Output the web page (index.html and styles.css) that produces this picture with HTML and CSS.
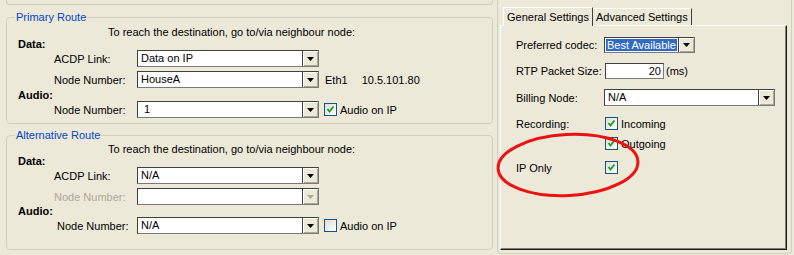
FILE: index.html
```html
<!DOCTYPE html>
<html lang="en">
<head>
    <meta charset="UTF-8">
    <title>Route Settings</title>
    <link rel="stylesheet" href="styles.css">
</head>
<body>
    <div class="window">
        <div class="left">
            <div class="group-tail"></div>

            <!-- primary route -->
            <fieldset class="group primary">
                <legend>Primary Route</legend>
                <p class="hint">To reach the destination, go to/via neighbour node:</p>
                <h4 class="section">Data:</h4>
                <div class="row">
                    <label class="field">ACDP Link:</label>
                    <div class="combo"><span class="value">Data on IP</span><span class="drop"><svg width="7" height="4" viewBox="0 0 7 4"><polygon points="0,0 7,0 3.5,4"/></svg></span></div>
                </div>
                <div class="row gap">
                    <label class="field">Node Number:</label>
                    <div class="combo"><span class="value">HouseA</span><span class="drop"><svg width="7" height="4" viewBox="0 0 7 4"><polygon points="0,0 7,0 3.5,4"/></svg></span></div>
                    <span class="iface">Eth1</span>
                    <span class="addr">10.5.101.80</span>
                </div>
                <h4 class="section audio">Audio:</h4>
                <div class="row">
                    <label class="field">Node Number:</label>
                    <div class="combo"><span class="value num">1</span><span class="drop"><svg width="7" height="4" viewBox="0 0 7 4"><polygon points="0,0 7,0 3.5,4"/></svg></span></div>
                    <span class="check on"><svg width="11" height="11" viewBox="0 0 11 11"><polyline points="2.5,5 4.5,7.5 8.5,2.5"/></svg></span>
                    <span class="check-label">Audio on IP</span>
                </div>
            </fieldset>

            <!-- alternative route -->
            <fieldset class="group alt">
                <legend>Alternative Route</legend>
                <p class="hint">To reach the destination, go to/via neighbour node:</p>
                <h4 class="section">Data:</h4>
                <div class="row">
                    <label class="field">ACDP Link:</label>
                    <div class="combo"><span class="value">N/A</span><span class="drop"><svg width="7" height="4" viewBox="0 0 7 4"><polygon points="0,0 7,0 3.5,4"/></svg></span></div>
                </div>
                <div class="row gap">
                    <label class="field disabled">Node Number:</label>
                    <div class="combo"><span class="value"></span><span class="drop off"><svg width="7" height="4" viewBox="0 0 7 4"><polygon points="0,0 7,0 3.5,4"/></svg></span></div>
                </div>
                <h4 class="section audio">Audio:</h4>
                <div class="row">
                    <label class="field shifted">Node Number:</label>
                    <div class="combo"><span class="value">N/A</span><span class="drop"><svg width="7" height="4" viewBox="0 0 7 4"><polygon points="0,0 7,0 3.5,4"/></svg></span></div>
                    <span class="check"></span>
                    <span class="check-label">Audio on IP</span>
                </div>
            </fieldset>
        </div>

        <div class="right">
            <div class="tabs">
                <span class="tab active">General Settings</span>
                <span class="tab">Advanced Settings</span>
            </div>
            <div class="panel">
                <div class="prow codec">
                    <span class="plabel">Preferred codec:</span>
                    <div class="combo small"><span class="value picked">Best Available</span><span class="drop"><svg width="7" height="4" viewBox="0 0 7 4"><polygon points="0,0 7,0 3.5,4"/></svg></span></div>
                </div>
                <div class="prow rtp">
                    <span class="plabel">RTP Packet Size:</span>
                    <span class="textbox">20</span>
                    <span class="unit">(ms)</span>
                </div>
                <div class="prow billing">
                    <span class="plabel">Billing Node:</span>
                    <div class="combo wide"><span class="value">N/A</span><span class="drop"><svg width="7" height="4" viewBox="0 0 7 4"><polygon points="0,0 7,0 3.5,4"/></svg></span></div>
                </div>
                <div class="prow rec">
                    <span class="plabel">Recording:</span>
                    <span class="check on"><svg width="11" height="11" viewBox="0 0 11 11"><polyline points="2.5,5 4.5,7.5 8.5,2.5"/></svg></span>
                    <span class="check-label">Incoming</span>
                </div>
                <div class="prow out">
                    <span class="plabel"></span>
                    <span class="check on"><svg width="11" height="11" viewBox="0 0 11 11"><polyline points="2.5,5 4.5,7.5 8.5,2.5"/></svg></span>
                    <span class="check-label">Outgoing</span>
                </div>
                <div class="prow iponly">
                    <span class="plabel">IP Only</span>
                    <span class="check on"><svg width="11" height="11" viewBox="0 0 11 11"><polyline points="2.5,5 4.5,7.5 8.5,2.5"/></svg></span>
                </div>
            </div>
        </div>

        <!-- annotation drawn over the dialog -->
        <svg class="circle" width="150" height="72" viewBox="0 0 150 72">
            <ellipse cx="74" cy="35" rx="70" ry="30.5" transform="rotate(-3 74 35)"/>
        </svg>
    </div>
</body>
</html>
```

FILE: styles.css
```css
:root {
    --bg-main: #ece9d8;
    --group-line: #d0d0bf;
    --legend: #0046d5;
    --disabled: #aca899;
    --check-border: #1c5180;
    --check-mark: #21a121;
    --highlight: #316ac5;
}

body {
    margin: 0;
    width: 794px;
    height: 255px;
    overflow: hidden;
    background-color: var(--bg-main);
    font-family: 'Liberation Sans', Arial, sans-serif;
    font-size: 11px;
    color: #000;
}

.window {
    position: relative;
    display: flex;
    height: 255px;
}

/* left column */
.left {
    width: 487px;
    padding: 0 3px 0 6px;
    flex-shrink: 0;
}

.group-tail {
    height: 4px;
    border: 1px solid var(--group-line);
    border-top: none;
    border-radius: 0 0 4px 4px;
}

.group {
    margin: 5px 0 0 0;
    padding: 0 0 5px 8px;
    border: 1px solid var(--group-line);
    border-radius: 4px;
    min-inline-size: 0;
}

.group legend {
    padding: 0 1px;
    line-height: 14px;
    color: var(--legend);
}

.hint {
    margin: 2px 0 0 93px;
    line-height: 12px;
}

.section {
    margin: 0 0 0 3px;
    font-size: 11px;
    font-weight: bold;
    line-height: 12px;
}
.section.audio {
    margin-top: 1px;
}

.alt {
    margin-top: 4px;
    padding-bottom: 15px;
}
.alt .hint {
    margin-top: 1px;
}
.alt .section {
    margin-top: 1px;
    line-height: 11px;
}

.row {
    display: flex;
    align-items: center;
    height: 17px;
}
.row.gap {
    margin-top: 4px;
}

.field {
    width: 83px;
    margin-left: 39px;
    flex-shrink: 0;
}
.field.shifted {
    width: 80px;
    margin-left: 42px;
}
.field.disabled {
    color: var(--disabled);
}

/* combo box */
.combo {
    display: flex;
    width: 180px;
    height: 15px;
    background: #fff;
    border: 1px solid;
    border-color: #404040 #7a7a7a #7a7a7a #404040;
    flex-shrink: 0;
}
.combo .value {
    flex: 1;
    padding-left: 3px;
    line-height: 15px;
    overflow: hidden;
    white-space: nowrap;
}
.combo .value.num {
    padding-left: 6px;
}
.combo .drop {
    width: 15px;
    display: flex;
    align-items: center;
    justify-content: center;
    background: var(--bg-main);
    border-left: 1px solid #404040;
    box-shadow: inset 1px 1px 0 #fff, inset -1px -1px 0 #aca899;
}
.combo .drop svg {
    fill: #000;
}
.combo .drop.off svg {
    fill: var(--disabled);
}

.iface {
    margin-left: 6px;
}
.addr {
    margin-left: 14px;
}

/* checkbox */
.check {
    width: 11px;
    height: 11px;
    margin-left: 5px;
    border: 1px solid var(--check-border);
    background: linear-gradient(135deg, #dcdcd7, #fff);
    flex-shrink: 0;
}
.check svg {
    display: block;
    fill: none;
    stroke: var(--check-mark);
    stroke-width: 2;
}
.check-label {
    margin-left: 3px;
}

/* right column */
.right {
    width: 288px;
    height: 247px;
    margin: 0 2px 0 1px;
    padding: 6px 4px 0 2px;
    border: 1px solid var(--group-line);
    border-top: none;
    border-radius: 0 0 4px 4px;
}

.tabs {
    display: flex;
    padding-left: 3px;
    height: 19px;
    align-items: flex-end;
}

.tab {
    line-height: 16px;
    padding: 0 3px 0 3px;
    border-top: 1px solid #fff;
    border-right: 1px solid #404040;
}
.tab.active {
    position: relative;
    height: 18px;
    line-height: 18px;
    padding: 0 3px 0 3px;
    border-left: 1px solid #fff;
    margin-bottom: -1px;
    background: var(--bg-main);
    z-index: 1;
}

.panel {
    height: 223px;
    border: 1px solid;
    border-color: #fff #1a1a1a #1a1a1a #fff;
    box-shadow: inset -1px -1px 0 #808080;
    padding: 0 0 0 15px;
}

.prow {
    display: flex;
    align-items: center;
}
.plabel {
    width: 88px;
    flex-shrink: 0;
}
.prow .check {
    margin-left: 1px;
}

.codec {
    margin-top: 11px;
    height: 16px;
}
.combo.small {
    width: 89px;
    height: 14px;
    border-color: #404040 #7a7a7a #7a7a7a #404040;
}
.combo.small .value {
    padding-left: 0;
    line-height: 12px;
    margin: 1px;
}
.combo .value.picked {
    background: var(--highlight);
    color: #fff;
    padding-left: 1px;
}

.rtp {
    margin-top: 10px;
    height: 16px;
}
.textbox {
    width: 55px;
    height: 14px;
    margin-left: 1px;
    padding-right: 2px;
    line-height: 14px;
    text-align: right;
    background: #fff;
    border: 1px solid;
    border-color: #404040 #7a7a7a #7a7a7a #404040;
}
.unit {
    margin-left: 2px;
}

.billing {
    margin-top: 10px;
    height: 17px;
}
.combo.wide {
    width: 169px;
}

.rec {
    margin-top: 11px;
    height: 13px;
}
.out {
    margin-top: 7px;
    height: 13px;
}
.iponly {
    margin-top: 11px;
    height: 13px;
}

/* red annotation ellipse */
.circle {
    position: absolute;
    left: 494px;
    top: 130px;
}
.circle ellipse {
    fill: none;
    stroke: #ee1111;
    stroke-width: 3;
}
```
